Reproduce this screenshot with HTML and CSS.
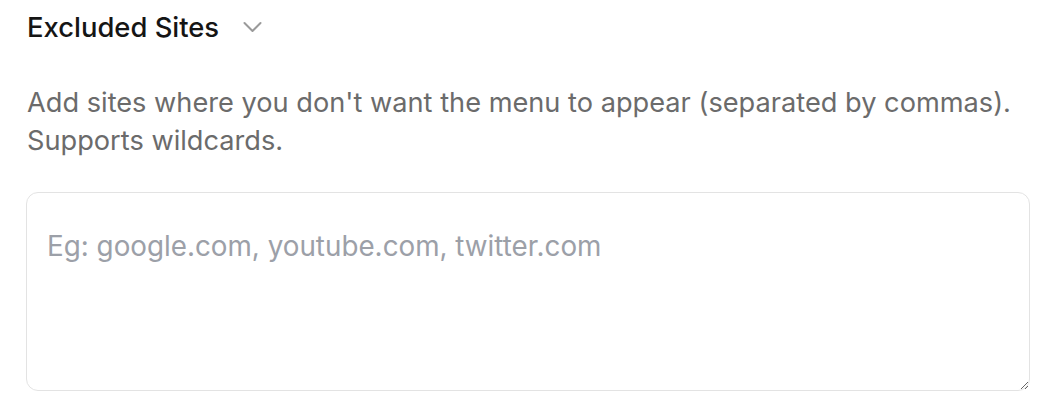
FILE: index.html
```html
<!DOCTYPE html>
<html lang="en">
<head>
<meta charset="utf-8">
<title>Excluded Sites</title>
<link rel="stylesheet" href="styles.css">
</head>
<body>
<section class="panel">
  <div class="panel-header">
    <h2 class="panel-title">Excluded Sites</h2>
    <svg class="chevron" width="19" height="12" viewBox="0 0 19 12" aria-hidden="true">
      <path d="M1.5 2 L9.5 10 L17.5 2" fill="none" stroke="#9a9a9a" stroke-width="2" stroke-linecap="round" stroke-linejoin="round"/>
    </svg>
  </div>
  <p class="panel-desc">Add sites where you don't want the menu to appear (separated by commas). Supports wildcards.</p>
  <textarea class="sites-input" placeholder="Eg: google.com, youtube.com, twitter.com"></textarea>
</section>
</body>
</html>
```
FILE: styles.css
```css
html, body {
  margin: 0;
  padding: 0;
  background: #ffffff;
}

.panel {
  padding: 9px 24px 0 27px;
  font-family: "Inter", "Noto Sans", sans-serif;
}

.panel-header {
  display: flex;
  align-items: center;
  gap: 24px;
  height: 36px;
}

.panel-title {
  margin: 0;
  font-size: 27.4px;
  font-weight: 500;
  color: #151515;
  letter-spacing: 0;
}

.chevron {
  display: block;
}

.panel-desc {
  margin: 39px 0 0 0;
  max-width: 1000px;
  font-size: 27.2px;
  line-height: 38px;
  color: #6b6b6b;
  letter-spacing: 0;
}

.sites-input {
  display: block;
  box-sizing: border-box;
  width: 1004px;
  height: 199px;
  margin: 32px 0 0 -1px;
  padding: 36px 20px;
  border: 1.5px solid #e3e3e3;
  border-radius: 12px;
  font-family: "Inter", "Noto Sans", sans-serif;
  font-size: 27.8px;
  line-height: 34px;
  color: #333333;
  resize: vertical;
  outline: none;
}

.sites-input::placeholder {
  color: #9ca0a8;
}
```
